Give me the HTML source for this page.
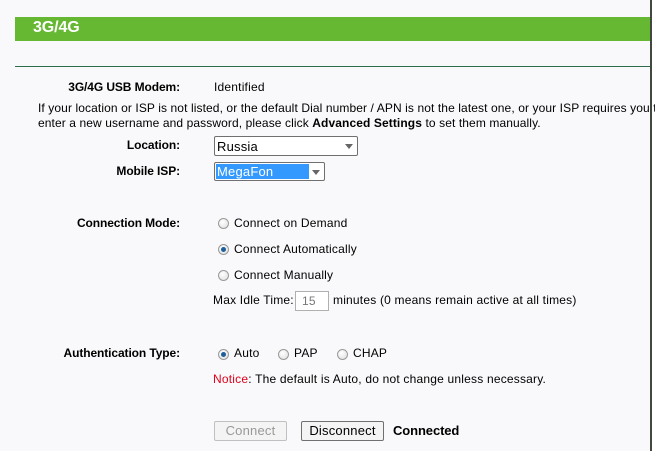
<!DOCTYPE html>
<html><head><meta charset="utf-8"><style>
*{margin:0;padding:0;box-sizing:border-box}
body{width:655px;height:451px;background:#f9f9fb;font-family:"Liberation Sans",Arial,sans-serif;font-size:12px;color:#000;position:relative;overflow:hidden;letter-spacing:0.2px}
.a{position:absolute;white-space:nowrap}
.b{font-weight:bold;letter-spacing:-0.1px}
.r{text-align:right}
.rad{position:absolute;width:11px;height:11px;border-radius:50%;border:1px solid #9a9a9a;background:radial-gradient(circle at 40% 35%,#fff,#ddd)}
.rad.on::after{content:"";position:absolute;left:2px;top:2px;width:5px;height:5px;border-radius:50%;background:#1f5f9a}
.sel{position:absolute;border:1px solid #707070;border-radius:2px;background:#fff;font-size:13px}
.arr{position:absolute;right:4px;top:7px;width:0;height:0;border-left:4px solid transparent;border-right:4px solid transparent;border-top:5px solid #666}
.btn{position:absolute;border:1px solid #707070;border-radius:2px;background:#f4f4f4;font-size:13px;text-align:center}
</style></head><body>
<div class="a" style="left:15px;top:17px;width:635px;height:24px;background:#66b832"></div>
<div class="a b" style="left:33px;top:19px;font-size:16px;color:#fff;">3G/4G</div>
<div class="a" style="left:650px;top:0;width:2px;height:451px;background:#404840"></div>
<div class="a" style="left:652px;top:0;width:3px;height:451px;background:#fff"></div>
<div class="a" style="left:15px;top:66px;width:635px;height:1px;background:#2d6e4a"></div>

<div class="a b r" style="left:20px;width:160px;top:80px;">3G/4G USB Modem:</div>
<div class="a" style="left:214px;top:80px;">Identified</div>
<div class="a" style="left:38px;top:101px;letter-spacing:0.1px">If your location or ISP is not listed, or the default Dial number / APN is not the latest one, or your ISP requires you to</div>
<div class="a" style="left:38px;top:116px;letter-spacing:0.1px">enter a new username and password, please click <b>Advanced Settings</b> to set them manually.</div>

<div class="a b r" style="left:20px;width:160px;top:138px;">Location:</div>
<div class="sel" style="left:214px;top:136px;width:144px;height:20px;"><span class="a" style="left:2px;top:2px">Russia</span><span class="arr"></span></div>
<div class="a b r" style="left:20px;width:160px;top:164px;">Mobile ISP:</div>
<div class="sel" style="left:214px;top:162px;width:111px;height:19px;"><span class="a" style="left:1px;top:1px;width:93px;height:15px;background:#3399ff;color:#fff;padding-left:1px">MegaFon</span><span class="arr"></span></div>

<div class="a b r" style="left:20px;width:160px;top:216px;">Connection Mode:</div>
<div class="rad" style="left:218px;top:218px"></div><div class="a" style="left:234px;top:216px;">Connect on Demand</div>
<div class="rad on" style="left:218px;top:244px"></div><div class="a" style="left:234px;top:242px;">Connect Automatically</div>
<div class="rad" style="left:218px;top:270px"></div><div class="a" style="left:234px;top:268px;">Connect Manually</div>
<div class="a" style="left:213px;top:293px;">Max Idle Time:</div>
<div class="a" style="left:295px;top:291px;width:34px;height:20px;border:1px solid #b0b0b0;background:#fff;color:#777;padding:2px 0 0 6px;">15</div>
<div class="a" style="left:333px;top:293px;">minutes (0 means remain active at all times)</div>

<div class="a b r" style="left:20px;width:160px;top:346px;">Authentication Type:</div>
<div class="rad on" style="left:218px;top:349px"></div><div class="a" style="left:234px;top:346px;">Auto</div>
<div class="rad" style="left:278px;top:349px"></div><div class="a" style="left:294px;top:346px;">PAP</div>
<div class="rad" style="left:337px;top:349px"></div><div class="a" style="left:353px;top:346px;">CHAP</div>
<div class="a" style="left:213px;top:372px;"><span style="color:#e0001a">Notice</span>: The default is Auto, do not change unless necessary.</div>

<div class="btn" style="left:214px;top:421px;width:73px;height:20px;color:#999;border-color:#c0c0c0;line-height:18px">Connect</div>
<div class="btn" style="left:301px;top:421px;width:83px;height:20px;line-height:18px">Disconnect</div>
<div class="a b" style="left:393px;top:423px;font-size:13px;">Connected</div>
</body></html>
